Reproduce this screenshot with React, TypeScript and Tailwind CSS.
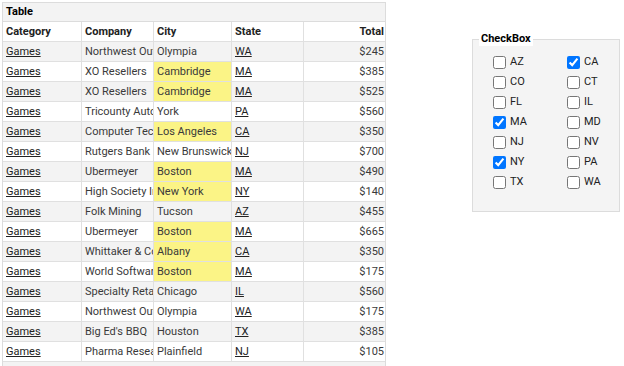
import { type ReactNode } from "react";

type Row = {
  company: string;
  city: string;
  state: string;
  total: string;
};

const rows: Row[] = [
  { company: "Northwest Outfitters", city: "Olympia", state: "WA", total: "$245" },
  { company: "XO Resellers", city: "Cambridge", state: "MA", total: "$385" },
  { company: "XO Resellers", city: "Cambridge", state: "MA", total: "$525" },
  { company: "Tricounty Automotive", city: "York", state: "PA", total: "$560" },
  { company: "Computer Technologies", city: "Los Angeles", state: "CA", total: "$350" },
  { company: "Rutgers Bank", city: "New Brunswick", state: "NJ", total: "$700" },
  { company: "Ubermeyer", city: "Boston", state: "MA", total: "$490" },
  { company: "High Society Inc", city: "New York", state: "NY", total: "$140" },
  { company: "Folk Mining", city: "Tucson", state: "AZ", total: "$455" },
  { company: "Ubermeyer", city: "Boston", state: "MA", total: "$665" },
  { company: "Whittaker & Co", city: "Albany", state: "CA", total: "$350" },
  { company: "World Software", city: "Boston", state: "MA", total: "$175" },
  { company: "Specialty Retail", city: "Chicago", state: "IL", total: "$560" },
  { company: "Northwest Outfitters", city: "Olympia", state: "WA", total: "$175" },
  { company: "Big Ed's BBQ", city: "Houston", state: "TX", total: "$385" },
  { company: "Pharma Research", city: "Plainfield", state: "NJ", total: "$105" },
];

const states = [
  ["AZ", "CA"],
  ["CO", "CT"],
  ["FL", "IL"],
  ["MA", "MD"],
  ["NJ", "NV"],
  ["NY", "PA"],
  ["TX", "WA"],
];

const checked = ["CA", "MA", "NY"];

function Cell({
  width,
  last,
  right,
  highlight,
  children,
}: {
  width: string;
  last?: boolean;
  right?: boolean;
  highlight?: boolean;
  children: ReactNode;
}) {
  return (
    <div
      className={[
        "flex h-full shrink-0 items-center overflow-hidden whitespace-nowrap px-[3px] pt-[1px]",
        width,
        last ? "" : "border-r border-[#e0e0e0]",
        right ? "justify-end pr-[1px]" : "",
        highlight ? "bg-[#fbf486]" : "",
      ].join(" ")}
    >
      {children}
    </div>
  );
}

function DataTable() {
  return (
    <div className="ml-[2px] mt-[2px] w-[384px] shrink-0 border border-[#dcdcdc] bg-[#f3f3f3] pb-[8px]">
      <div className="flex h-[19px] items-center border-b border-[#dcdcdc] px-[3px] pt-[1px] text-[11px] font-bold text-black">
        Table
      </div>
      <div className="flex h-[20px] border-b border-[#e0e0e0] bg-white text-[11px] font-bold text-[#222]">
        <Cell width="w-[79px]">Category</Cell>
        <Cell width="w-[72px]">Company</Cell>
        <Cell width="w-[78px]">City</Cell>
        <Cell width="w-[72px]">State</Cell>
        <Cell width="w-[81px]" last right>
          Total
        </Cell>
      </div>
      {rows.map((r, i) => (
        <div
          key={i}
          className={[
            "flex h-[20px] border-b border-[#e0e0e0] text-[11px] text-[#3a3a3a]",
            i % 2 === 0 ? "bg-[#f3f3f3]" : "bg-white",
          ].join(" ")}
        >
          <Cell width="w-[79px]">
            <span className="text-[#222] underline">Games</span>
          </Cell>
          <Cell width="w-[72px]">{r.company}</Cell>
          <Cell width="w-[78px]" highlight={checked.includes(r.state)}>
            {r.city}
          </Cell>
          <Cell width="w-[72px]">
            <span className="text-[#222] underline">{r.state}</span>
          </Cell>
          <Cell width="w-[81px]" last right>
            {r.total}
          </Cell>
        </div>
      ))}
    </div>
  );
}

function CheckBoxGroup() {
  return (
    <div className="relative ml-[86px] mt-[39px] h-[173px] w-[148px] shrink-0 border border-[#dcdcdc] bg-[#f4f4f4] pl-[20px] pt-[12px]">
      <div className="absolute left-[6px] top-[-8px] bg-white px-[2px] text-[11px] font-bold leading-[14px] text-black">
        CheckBox
      </div>
      {states.map((pair) => (
        <div key={pair[0]} className="flex h-[20px]">
          {pair.map((s) => (
            <label key={s} className="flex w-[74px] shrink-0 items-center text-[11px] text-[#222]">
              <input
                type="checkbox"
                readOnly
                checked={checked.includes(s)}
                className="m-0 h-[13px] w-[13px]"
              />
              <span className="ml-[4px]">{s}</span>
            </label>
          ))}
        </div>
      ))}
    </div>
  );
}

export default function App() {
  return (
    <div className="flex h-[366px] w-[624px] items-start overflow-hidden bg-white font-['Roboto',sans-serif]">
      <DataTable />
      <CheckBoxGroup />
    </div>
  );
}
